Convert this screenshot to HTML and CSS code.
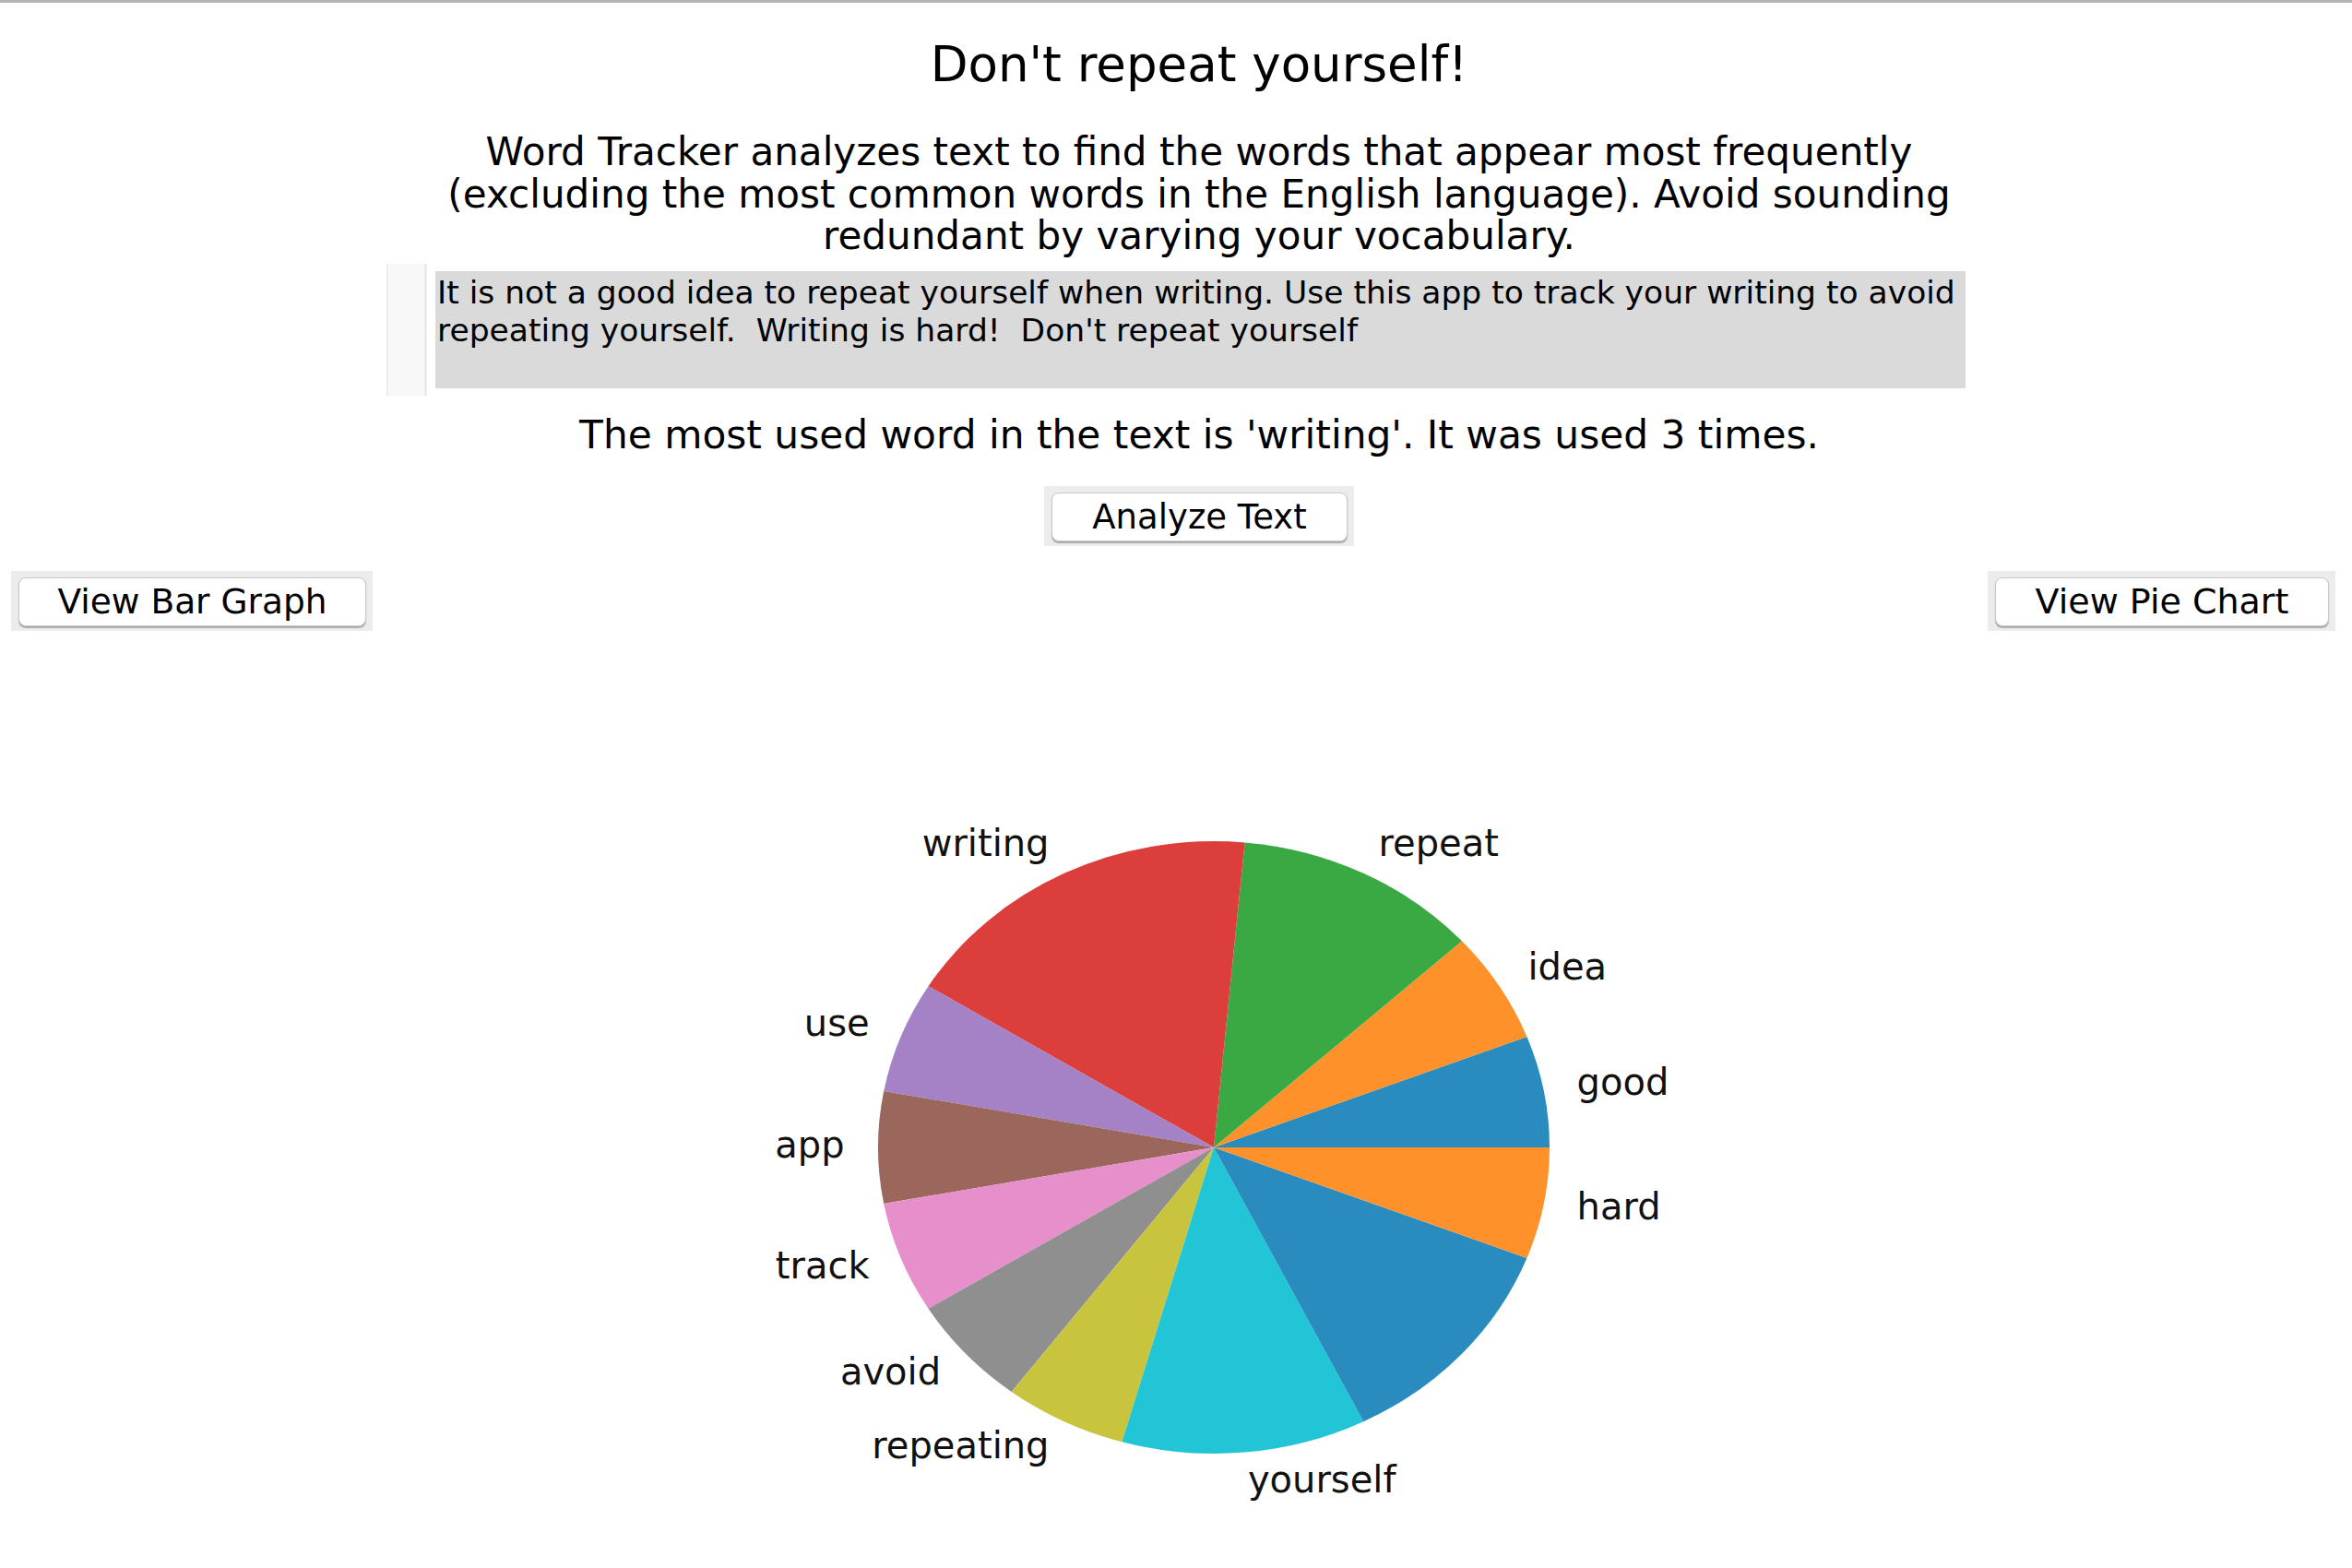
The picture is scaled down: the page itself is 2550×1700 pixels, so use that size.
FILE: index.html
```html
<!DOCTYPE html>
<html lang="en">
<head>
<meta charset="utf-8">
<title>Word Tracker</title>
<link rel="stylesheet" href="styles.css">
</head>
<body>
<div class="topbar"></div>
<div class="center">
  <h1 class="title">Don't repeat yourself!</h1>
  <p class="intro">Word Tracker analyzes text to find the words that appear most frequently (excluding the most common words in the English language). Avoid sounding redundant by varying your vocabulary.</p>
</div>
<div class="editor-row">
  <div class="gutter"></div>
  <div class="editor">It is not a good idea to repeat yourself when writing. Use this app to track your writing to avoid
repeating yourself.  Writing is hard!  Don't repeat yourself</div>
</div>
<div class="center">
  <p class="result">The most used word in the text is 'writing'. It was used 3 times.</p>
  <div class="btn-wrap analyze-wrap"><button class="btn btn-analyze">Analyze Text</button></div>
</div>
<div class="btn-row">
  <div class="btn-wrap"><button class="btn btn-bar">View Bar Graph</button></div>
  <div class="btn-wrap"><button class="btn btn-pie">View Pie Chart</button></div>
</div>
<div class="chart">
  <svg class="pie" width="1200" height="880" viewBox="0 0 1200 880">
    <g transform="translate(100,0)">
      <path fill="#2a8bbf" d="M541,453 L905,453 A364,332 0 0 0 880.42,333.07 Z"/>
      <path fill="#fe912a" d="M541,453 L880.42,333.07 A364,332 0 0 0 810,229.33 Z"/>
      <path fill="#3aa943" d="M541,453 L810,229.33 A364,332 0 0 0 574.59,122.42 Z"/>
      <path fill="#dc3e3c" d="M541,453 L574.59,122.42 A364,332 0 0 0 231.52,278.23 Z"/>
      <path fill="#a581c5" d="M541,453 L231.52,278.23 A364,332 0 0 0 183.2,391.99 Z"/>
      <path fill="#9b675d" d="M541,453 L183.2,391.99 A364,332 0 0 0 183.2,514.01 Z"/>
      <path fill="#e78fca" d="M541,453 L183.2,514.01 A364,332 0 0 0 231.52,627.77 Z"/>
      <path fill="#8f8f8f" d="M541,453 L231.52,627.77 A364,332 0 0 0 321.64,717.94 Z"/>
      <path fill="#c9c43d" d="M541,453 L321.64,717.94 A364,332 0 0 0 441.39,772.33 Z"/>
      <path fill="#21c5d5" d="M541,453 L441.39,772.33 A364,332 0 0 0 703.25,750.19 Z"/>
      <path fill="#2a8bbf" d="M541,453 L703.25,750.19 A364,332 0 0 0 880.42,572.93 Z"/>
      <path fill="#fe912a" d="M541,453 L880.42,572.93 A364,332 0 0 0 905,453 Z"/>
      <g class="labels">
        <text x="934.6" y="396.4" text-anchor="start">good</text>
        <text x="881.4" y="271.2" text-anchor="start">idea</text>
        <text x="719.5" y="136.6" text-anchor="start">repeat</text>
        <text x="362.5" y="136.6" text-anchor="end">writing</text>
        <text x="167.6" y="331.6" text-anchor="end">use</text>
        <text x="140.6" y="463.5" text-anchor="end">app</text>
        <text x="167.6" y="595.4" text-anchor="end">track</text>
        <text x="245.1" y="709.5" text-anchor="end">avoid</text>
        <text x="362.5" y="790.4" text-anchor="end">repeating</text>
        <text x="577.9" y="827.1" text-anchor="start">yourself</text>
        <text x="934.6" y="530.6" text-anchor="start">hard</text>
      </g>
    </g>
  </svg>
</div>
</body>
</html>
```
FILE: styles.css
```css
html, body {
  margin: 0;
  padding: 0;
  background: #ffffff;
}

body {
  font-family: "DejaVu Sans", Verdana, sans-serif;
  color: #000000;
}

.topbar {
  height: 3px;
  background: #b5b5b5;
}

.center {
  padding-left: 50px;
  display: flex;
  flex-direction: column;
  align-items: center;
}

.title {
  margin: 36px 0 0;
  font-size: 53px;
  font-weight: normal;
  line-height: 61px;
  text-align: center;
}

.intro {
  margin: 42px 0 0;
  width: 1700px;
  font-size: 42.1px;
  line-height: 45.5px;
  text-align: center;
}

.editor-row {
  display: flex;
  justify-content: center;
  align-items: flex-start;
  gap: 9px;
  margin-top: 7.5px;
}

.gutter {
  width: 39px;
  height: 143px;
  background: #f8f8f8;
  border-left: 2px solid #ececec;
  border-right: 3px solid #ececec;
}

.editor {
  box-sizing: border-box;
  width: 1659px;
  height: 127px;
  margin-top: 8px;
  padding: 3px 2px;
  background: #dadada;
  font-size: 34.5px;
  line-height: 40.6px;
  white-space: pre-wrap;
  overflow: hidden;
}

.result {
  margin: 17.7px 0 0;
  font-size: 42.3px;
  line-height: 49.2px;
  text-align: center;
}

.btn-wrap {
  background: #ececec;
  padding: 7px 7px 5px 8px;
  display: flex;
}

.analyze-wrap {
  margin-top: 31px;
}

.btn {
  box-sizing: border-box;
  height: 53px;
  padding: 0;
  background: #ffffff;
  border: 1px solid #c8c8c8;
  border-radius: 8px;
  box-shadow: 0 1.5px 1px rgba(0, 0, 0, 0.28);
  font-family: "DejaVu Sans", "Lucida Grande", sans-serif;
  font-size: 37.5px;
  color: #000000;
  text-align: center;
}

.btn-analyze {
  width: 321px;
  font-size: 37px;
}

.btn-bar {
  width: 377px;
}

.btn-pie {
  width: 362px;
  font-size: 38px;
}

.btn-row {
  display: flex;
  justify-content: space-between;
  margin-top: 27px;
  padding: 0 18px 0 12px;
}

.chart {
  display: flex;
  justify-content: center;
  margin-top: 107px;
}

.pie {
  display: block;
}

.labels text {
  font-family: "DejaVu Sans", sans-serif;
  font-size: 40px;
  fill: #111111;
}
```
